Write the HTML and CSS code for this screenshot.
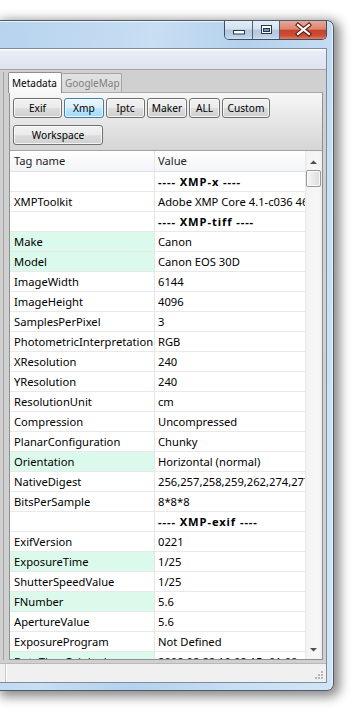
FILE: index.html
```html
<!DOCTYPE html>
<html>
<head>
<meta charset="utf-8">
<link rel="stylesheet" href="styles.css">
</head>
<body>
<div class="window">
  <div class="titlebar">
    <div class="caption-buttons">
      <div class="cbtn cbtn-min">
        <svg width="27" height="18" viewBox="0 0 27 18"><rect x="8.5" y="9.5" width="11" height="3.5" fill="#fff" stroke="#27384c"/></svg>
      </div>
      <div class="cbtn cbtn-max">
        <svg width="26" height="18" viewBox="0 0 26 18"><rect x="8.5" y="4.5" width="10" height="8" fill="#fff" stroke="#27384c"/><rect x="10.5" y="7.5" width="6" height="3" fill="#7d92ab" stroke="#27384c"/></svg>
      </div>
      <div class="cbtn cbtn-close">
        <svg width="46" height="18" viewBox="0 0 46 18"><path d="M18 4 L29 13 M29 4 L18 13" stroke="#5a1a10" stroke-width="4.2" stroke-linecap="square"/><path d="M18 4 L29 13 M29 4 L18 13" stroke="#ffffff" stroke-width="2.2" stroke-linecap="square"/></svg>
      </div>
    </div>
  </div>
  <div class="client">
    <div class="toolbar"></div>
    <div class="main">
      <div class="pane">
        <div class="tabs">
          <div class="tab tab-active">Metadata</div>
          <div class="tab tab-inactive">GoogleMap</div>
        </div>
        <div class="tabpanel">
          <div class="btnarea">
            <div class="btnrow">
              <div class="btn w-exif">Exif</div>
              <div class="btn btn-active w-xmp">Xmp</div>
              <div class="btn w-iptc">Iptc</div>
              <div class="btn w-maker">Maker</div>
              <div class="btn w-all">ALL</div>
              <div class="btn w-custom">Custom</div>
            </div>
            <div class="btnrow">
              <div class="btn w-work">Workspace</div>
            </div>
          </div>
          <div class="table">
            <div class="grid">
              <div class="hdr"><div class="c1">Tag name</div><div class="c2">Value</div></div>
              <div class="rows">
                <div class="row"><div class="c1"></div><div class="c2 sec">---- XMP-x ----</div></div>
                <div class="row"><div class="c1">XMPToolkit</div><div class="c2">Adobe XMP Core 4.1-c036 46.276720, Mon Feb 19 2007</div></div>
                <div class="row"><div class="c1"></div><div class="c2 sec">---- XMP-tiff ----</div></div>
                <div class="row"><div class="c1 hl">Make</div><div class="c2">Canon</div></div>
                <div class="row"><div class="c1 hl">Model</div><div class="c2">Canon EOS 30D</div></div>
                <div class="row"><div class="c1">ImageWidth</div><div class="c2">6144</div></div>
                <div class="row"><div class="c1">ImageHeight</div><div class="c2">4096</div></div>
                <div class="row"><div class="c1">SamplesPerPixel</div><div class="c2">3</div></div>
                <div class="row"><div class="c1">PhotometricInterpretation</div><div class="c2">RGB</div></div>
                <div class="row"><div class="c1">XResolution</div><div class="c2">240</div></div>
                <div class="row"><div class="c1">YResolution</div><div class="c2">240</div></div>
                <div class="row"><div class="c1">ResolutionUnit</div><div class="c2">cm</div></div>
                <div class="row"><div class="c1">Compression</div><div class="c2">Uncompressed</div></div>
                <div class="row"><div class="c1">PlanarConfiguration</div><div class="c2">Chunky</div></div>
                <div class="row"><div class="c1 hl">Orientation</div><div class="c2">Horizontal (normal)</div></div>
                <div class="row"><div class="c1">NativeDigest</div><div class="c2">256,257,258,259,262,274,277,284,530,531</div></div>
                <div class="row"><div class="c1">BitsPerSample</div><div class="c2">8*8*8</div></div>
                <div class="row"><div class="c1"></div><div class="c2 sec">---- XMP-exif ----</div></div>
                <div class="row"><div class="c1">ExifVersion</div><div class="c2">0221</div></div>
                <div class="row"><div class="c1 hl">ExposureTime</div><div class="c2">1/25</div></div>
                <div class="row"><div class="c1">ShutterSpeedValue</div><div class="c2">1/25</div></div>
                <div class="row"><div class="c1 hl">FNumber</div><div class="c2">5.6</div></div>
                <div class="row"><div class="c1">ApertureValue</div><div class="c2">5.6</div></div>
                <div class="row"><div class="c1">ExposureProgram</div><div class="c2">Not Defined</div></div>
                <div class="row"><div class="c1 hl">DateTimeOriginal</div><div class="c2">2008:02:22 10:08:15+01:00</div></div>
              </div>
            </div>
            <div class="vscroll">
              <div class="sb-btn">
                <svg width="17" height="17" viewBox="0 0 17 17"><path d="M5 13 L8.5 9.5 L12 13 Z" fill="#4e4e4e"/></svg>
              </div>
              <div class="sb-thumb"></div>
              <div class="sb-track"></div>
              <div class="sb-btn">
                <svg width="17" height="17" viewBox="0 0 17 17"><path d="M5 6 L12 6 L8.5 9.5 Z" fill="#4e4e4e"/></svg>
              </div>
            </div>
          </div>
        </div>
      </div>
    </div>
    <div class="statusbar">
      <div class="sb-sep"></div>
      <div class="grip">
        <svg width="11" height="11" viewBox="0 0 11 11">
          <rect x="8" y="0" width="2" height="2" fill="#b8b8b8"/>
          <rect x="5" y="3" width="2" height="2" fill="#b8b8b8"/><rect x="8" y="3" width="2" height="2" fill="#b8b8b8"/>
          <rect x="2" y="6" width="2" height="2" fill="#b8b8b8"/><rect x="5" y="6" width="2" height="2" fill="#b8b8b8"/><rect x="8" y="6" width="2" height="2" fill="#b8b8b8"/>
        </svg>
      </div>
    </div>
  </div>
</div>
</body>
</html>
```

FILE: styles.css
```css
html, body {
  margin: 0;
  padding: 0;
  background: #ffffff;
}
body {
  width: 356px;
  height: 713px;
  overflow: hidden;
  font-family: "Noto Sans", "Segoe UI", sans-serif;
  font-size: 11.2px;
  color: #000;
}
.window {
  box-sizing: border-box;
  margin-top: 20px;
  width: 334px;
  height: 671px;
  border: 1px solid #4d5a68;
  border-left: none;
  border-radius: 0 7px 7px 0;
  padding: 0 6px 7px 0;
  display: flex;
  flex-direction: column;
  background: linear-gradient(100deg, #b7d3ee 0%, #c7def3 35%, #b5d1ed 55%, #c9dff4 80%, #d2e5f6 100%);
  box-shadow: 3px 3px 11px 3px rgba(0, 0, 0, 0.45), inset 0 1px 0 rgba(255,255,255,0.7), inset -1px 0 0 rgba(255,255,255,0.6);
}
.titlebar {
  flex: none;
  height: 27px;
  display: flex;
  justify-content: flex-end;
  align-items: flex-start;
}
.caption-buttons {
  display: flex;
  border: 1px solid #3d4f64;
  border-top: none;
  border-radius: 0 0 5px 5px;
  overflow: hidden;
  height: 18px;
}
.cbtn {
  height: 18px;
  display: flex;
}
.cbtn-min, .cbtn-max {
  background: linear-gradient(#e4edf7 0%, #d3e0ef 45%, #b3c7de 50%, #bccfe4 85%, #d0dff0 100%);
  border-right: 1px solid #4e6179;
}
.cbtn-min { width: 27px; }
.cbtn-max { width: 26px; }
.cbtn-close {
  width: 46px;
  background: linear-gradient(#e9a797 0%, #dc8670 45%, #c6432a 52%, #cc4d33 80%, #e07d62 100%);
}
.client {
  flex: 1;
  min-height: 0;
  display: flex;
  flex-direction: column;
  border: 1px solid #7d8c9e;
  border-left: none;
  background: #d0d0d0;
}
.toolbar {
  flex: none;
  height: 20px;
  border-bottom: 1px solid #a6a6a6;
  background: linear-gradient(#ffffff 0, #ffffff 1px, #eaedf6 2px, #dee3ef 100%);
}
.main {
  flex: 1;
  min-height: 0;
  padding: 2px 3px 3px 3px;
  display: flex;
}
.pane {
  flex: 1;
  min-height: 0;
  border-left: 1px solid #a2a2a2;
  padding-left: 4px;
  display: flex;
  flex-direction: column;
}
.tabs {
  flex: none;
  height: 20px;
  display: flex;
  align-items: flex-end;
  font-size: 10px;
}
.tab {
  box-sizing: border-box;
  display: flex;
  align-items: center;
  border-radius: 2px 2px 0 0;
  white-space: nowrap;
}
.tab-active {
  position: relative;
  z-index: 1;
  width: 54px;
  height: 21px;
  margin-bottom: -1px;
  padding-left: 3px;
  padding-bottom: 1px;
  border: 1px solid #8b8e95;
  border-bottom: none;
  background: linear-gradient(#ffffff, #f7f7f7);
  color: #000;
}
.tab-inactive {
  width: 60px;
  height: 19px;
  padding-left: 3px;
  border: 1px solid #a6a6a6;
  border-left: none;
  border-bottom: none;
  background: linear-gradient(#e2e2e2, #d8d8d8);
  color: #7e7e7e;
}
.tabpanel {
  flex: 1;
  min-height: 0;
  margin-left: 1px;
  border: 1px solid #8f8f8f;
  border-top-color: #a9a9a9;
  display: flex;
  flex-direction: column;
}
.btnarea {
  flex: none;
  box-sizing: border-box;
  height: 57px;
  padding: 5px 0 0 3px;
  display: flex;
  flex-direction: column;
  gap: 7px;
  background: linear-gradient(#f7f7f7, #e6e6e6 50%, #d5d5d5);
  font-size: 10.2px;
}
.btnrow {
  display: flex;
  gap: 2px;
}
.btn {
  box-sizing: border-box;
  height: 20px;
  display: flex;
  align-items: center;
  justify-content: center;
  border: 1px solid #707070;
  border-radius: 3px;
  background: linear-gradient(#f2f2f2 0%, #ebebeb 48%, #dddddd 52%, #cfcfcf 100%);
  box-shadow: inset 0 0 0 1px rgba(255, 255, 255, 0.75);
  color: #000;
  white-space: nowrap;
}
.btn-active {
  border-color: #3c7fb1;
  background: linear-gradient(#eaf6fd 0%, #d9f0fc 48%, #bee6fd 52%, #a7d9f5 100%);
}
.w-exif { width: 49px; }
.w-xmp { width: 40px; }
.w-iptc { width: 39px; }
.w-maker { width: 40px; }
.w-all { width: 31px; }
.w-custom { width: 48px; }
.w-work { width: 90px; }
.table {
  flex: 1;
  min-height: 0;
  display: flex;
  border-top: 1px solid #a3a3a3;
  background: #ffffff;
}
.grid {
  width: 295px;
  min-height: 0;
  display: flex;
  flex-direction: column;
  overflow: hidden;
}
.hdr {
  height: 20px;
  flex: none;
  display: flex;
  border-bottom: 1px solid #e2e2e2;
  background: linear-gradient(#ffffff, #f3f4f6);
  color: #1e1e1e;
  line-height: 20px;
}
.rows {
  flex: 1;
  min-height: 0;
  overflow: hidden;
}
.row {
  height: 19px;
  display: flex;
  border-bottom: 1px solid #e9e9e9;
  line-height: 19px;
}
.c1 {
  box-sizing: border-box;
  width: 145px;
  flex: none;
  padding-left: 4px;
  border-right: 1px solid #e6e6e6;
  display: block;
  text-align: left;
  white-space: nowrap;
  overflow: hidden;
}
.c2 {
  box-sizing: border-box;
  width: 150px;
  flex: none;
  padding-left: 3px;
  display: block;
  text-align: left;
  white-space: nowrap;
  overflow: hidden;
}
.hl {
  background: #dcfaeb;
}
.sec {
  font-weight: bold;
  letter-spacing: 0.9px;
}
.vscroll {
  width: 17px;
  min-height: 0;
  display: flex;
  flex-direction: column;
  background: linear-gradient(to right, #e6e6e6 0, #f4f4f4 2px, #f6f6f6 14px, #ececec 17px);
}
.sb-btn {
  height: 17px;
  flex: none;
}
.sb-thumb {
  flex: none;
  box-sizing: border-box;
  height: 17px;
  margin: 2px 1px 0 1px;
  border: 1px solid #989898;
  border-radius: 2px;
  background: linear-gradient(to right, #f6f6f6, #e9e9e9 50%, #dcdcdc);
  box-shadow: inset 0 0 0 1px rgba(255,255,255,0.8);
}
.sb-track {
  flex: 1;
  min-height: 0;
}
.statusbar {
  flex: none;
  height: 18px;
  border-top: 1px solid #b9b9b9;
  background: #f0f0f0;
  display: flex;
  align-items: stretch;
}
.sb-sep {
  width: 1px;
  margin-left: 5px;
  background: #c9c9c9;
  box-shadow: 1px 0 0 #ffffff;
}
.grip {
  margin-left: auto;
  margin-right: 2px;
  align-self: flex-end;
  display: flex;
}
```
